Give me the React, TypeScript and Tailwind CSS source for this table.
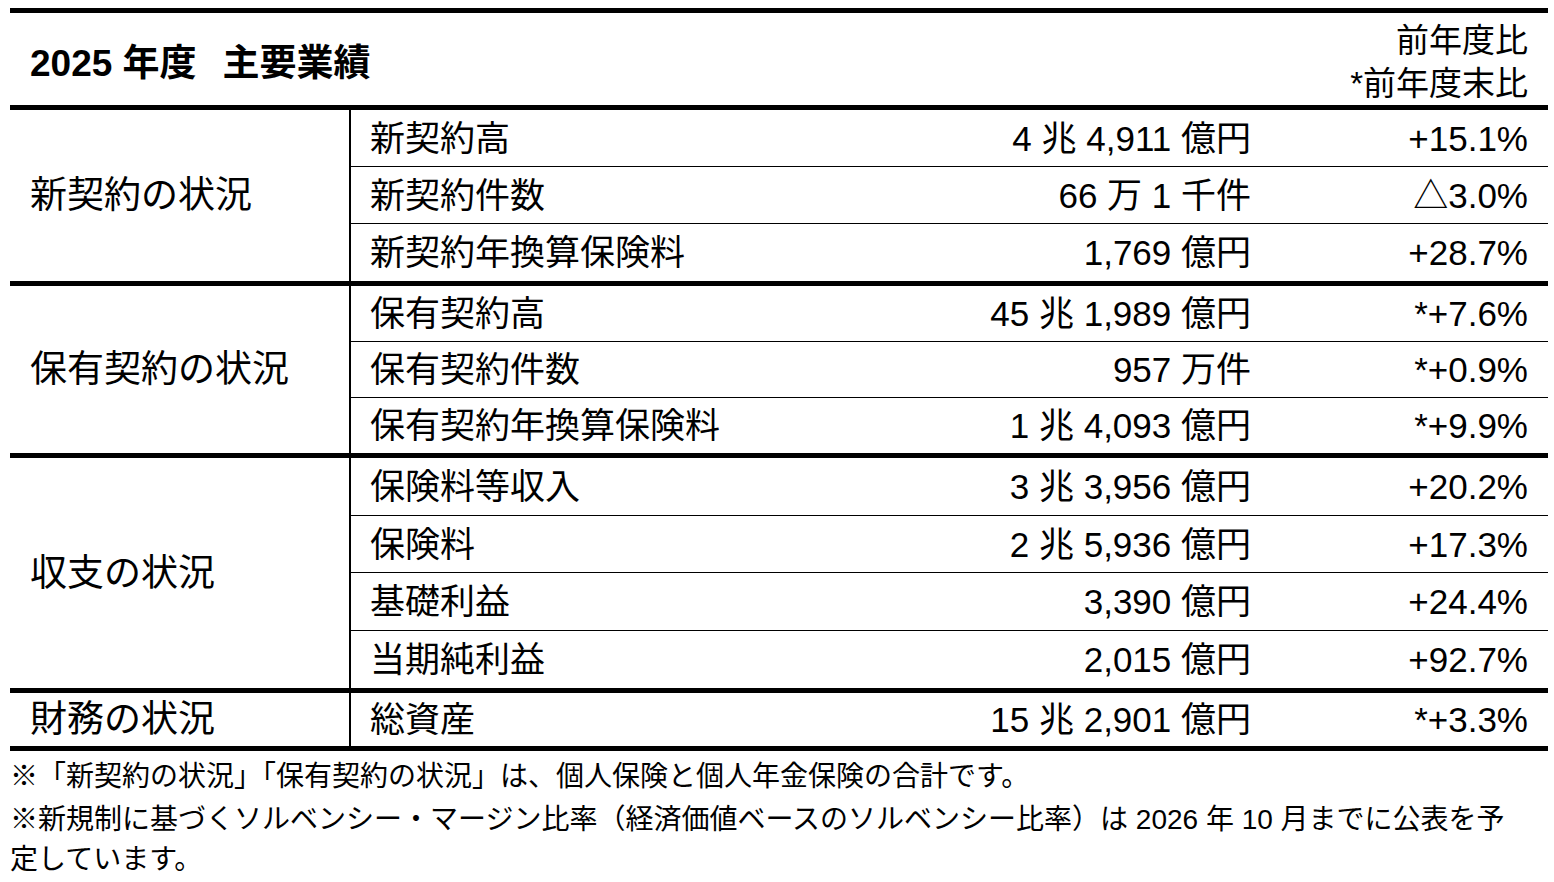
import React from "react";

type Row = { name: string; value: string; pct: string; h: string };
type Group = { label: string; rows: Row[] };

const groups: Group[] = [
  {
    label: "新契約の状況",
    rows: [
      { name: "新契約高", value: "4 兆 4,911 億円", pct: "+15.1%", h: "h-[57px]" },
      { name: "新契約件数", value: "66 万 1 千件", pct: "△3.0%", h: "h-[57px]" },
      { name: "新契約年換算保険料", value: "1,769 億円", pct: "+28.7%", h: "h-[57px]" },
    ],
  },
  {
    label: "保有契約の状況",
    rows: [
      { name: "保有契約高", value: "45 兆 1,989 億円", pct: "*+7.6%", h: "h-[56px]" },
      { name: "保有契約件数", value: "957 万件", pct: "*+0.9%", h: "h-[56px]" },
      { name: "保有契約年換算保険料", value: "1 兆 4,093 億円", pct: "*+9.9%", h: "h-[55px]" },
    ],
  },
  {
    label: "収支の状況",
    rows: [
      { name: "保険料等収入", value: "3 兆 3,956 億円", pct: "+20.2%", h: "h-[58px]" },
      { name: "保険料", value: "2 兆 5,936 億円", pct: "+17.3%", h: "h-[57px]" },
      { name: "基礎利益", value: "3,390 億円", pct: "+24.4%", h: "h-[58px]" },
      { name: "当期純利益", value: "2,015 億円", pct: "+92.7%", h: "h-[57px]" },
    ],
  },
  {
    label: "財務の状況",
    rows: [{ name: "総資産", value: "15 兆 2,901 億円", pct: "*+3.3%", h: "h-[53px]" }],
  },
];

export default function App() {
  return (
    <div className="min-h-[882px] w-[1554px] bg-white text-black font-['Liberation_Sans','Noto_Sans_CJK_JP',sans-serif] pt-[8px] pl-[10px]">
      <div className="w-[1538px] border-t-[5px] border-black">
        {/* header */}
        <div className="flex h-[97px] items-center justify-between pl-[20px] pr-[20px] border-b-[5px] border-black">
          <div className="text-[37px] font-bold leading-none pt-[8px] whitespace-nowrap">
            2025 年度<span className="ml-[26px]">主要業績</span>
          </div>
          <div className="flex flex-col items-end text-[33px] leading-[43px] pt-[6px]">
            <div>前年度比</div>
            <div>*前年度末比</div>
          </div>
        </div>
        {groups.map((g) => (
          <div key={g.label} className="flex border-b-[5px] border-black">
            <div className="w-[341px] shrink-0 flex items-center pl-[20px] border-r-2 border-black text-[37px] leading-none">
              {g.label}
            </div>
            <div className="flex-1 flex flex-col">
              {g.rows.map((r, i) => (
                <div
                  key={r.name}
                  className={`${r.h} flex items-center justify-between pl-[19px] pr-[20px] text-[35px] leading-none ${
                    i < g.rows.length - 1 ? "border-b border-black" : ""
                  }`}
                >
                  <div className="whitespace-nowrap">{r.name}</div>
                  <div className="flex items-center">
                    <div className="whitespace-nowrap text-right">{r.value}</div>
                    <div className="w-[277px] text-right whitespace-nowrap">{r.pct}</div>
                  </div>
                </div>
              ))}
            </div>
          </div>
        ))}
      </div>
      <div className="text-[28px] leading-[43px] pt-[4px]">
        <div className="whitespace-nowrap">
          ※「新契約の状況」「保有契約の状況」は、個人保険と個人年金保険の合計です。
        </div>
        <div className="whitespace-nowrap">
          ※新規制に基づくソルベンシー・マージン比率（経済価値ベースのソルベンシー比率）は 2026 年 10 月までに公表を予
        </div>
        <div className="whitespace-nowrap leading-[38px]">定しています。</div>
      </div>
    </div>
  );
}
